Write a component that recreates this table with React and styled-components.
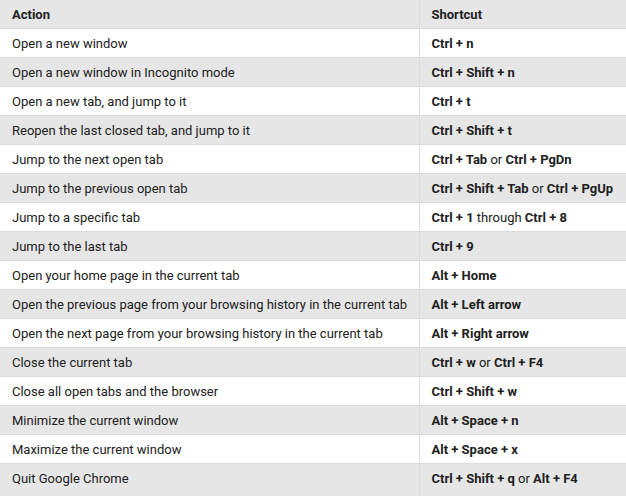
import React from 'react';
import styled, { createGlobalStyle } from 'styled-components';

const GlobalStyle = createGlobalStyle`
  html, body {
    margin: 0;
    padding: 0;
    background: #ffffff;
  }
  body {
    font-family: Roboto, 'Liberation Sans', Arial, sans-serif;
  }
`;

const Table = styled.table`
  width: 626px;
  border-collapse: collapse;
  table-layout: fixed;
  font-size: 13px;
  color: #212121;
`;

const Row = styled.tr`
  background: ${(p) => (p.$shaded ? '#e6e6e6' : '#ffffff')};
  border-bottom: 1px solid #dcdcdc;

  tbody &:last-child {
    border-bottom: none;
  }
  tbody &:last-child td {
    padding-bottom: 4px;
  }
`;

const Head = styled.th`
  height: 28px;
  padding: 0 12px;
  text-align: left;
  font-weight: 700;
  border-left: ${(p) => (p.$divider ? '1px solid #dcdcdc' : 'none')};
`;

const Cell = styled.td`
  height: 28px;
  padding: 0 12px;
  white-space: nowrap;
  font-weight: ${(p) => (p.$keys ? 700 : 400)};
  border-left: ${(p) => (p.$divider ? '1px solid #dcdcdc' : 'none')};
`;

const Joiner = styled.span`
  font-weight: 400;
`;

const shortcuts = [
  ['Open a new window', ['Ctrl + n']],
  ['Open a new window in Incognito mode', ['Ctrl + Shift + n']],
  ['Open a new tab, and jump to it', ['Ctrl + t']],
  ['Reopen the last closed tab, and jump to it', ['Ctrl + Shift + t']],
  ['Jump to the next open tab', ['Ctrl + Tab', 'or', 'Ctrl + PgDn']],
  ['Jump to the previous open tab', ['Ctrl + Shift + Tab', 'or', 'Ctrl + PgUp']],
  ['Jump to a specific tab', ['Ctrl + 1', 'through', 'Ctrl + 8']],
  ['Jump to the last tab', ['Ctrl + 9']],
  ['Open your home page in the current tab', ['Alt + Home']],
  ['Open the previous page from your browsing history in the current tab', ['Alt + Left arrow']],
  ['Open the next page from your browsing history in the current tab', ['Alt + Right arrow']],
  ['Close the current tab', ['Ctrl + w', 'or', 'Ctrl + F4']],
  ['Close all open tabs and the browser', ['Ctrl + Shift + w']],
  ['Minimize the current window', ['Alt + Space + n']],
  ['Maximize the current window', ['Alt + Space + x']],
  ['Quit Google Chrome', ['Ctrl + Shift + q', 'or', 'Alt + F4']],
];

const Keys = ({ parts }) =>
  parts.map((part, index) =>
    index % 2 === 1 ? (
      <Joiner key={index}> {part} </Joiner>
    ) : (
      <React.Fragment key={index}>{part}</React.Fragment>
    )
  );

const App = () => (
  <>
    <GlobalStyle />
    <Table>
      <colgroup>
        <col style={{ width: 419 }} />
        <col />
      </colgroup>
      <thead>
        <Row $shaded>
          <Head>Action</Head>
          <Head $divider>Shortcut</Head>
        </Row>
      </thead>
      <tbody>
        {shortcuts.map(([action, keys], index) => (
          <Row key={action} $shaded={index % 2 === 1}>
            <Cell>{action}</Cell>
            <Cell $divider $keys>
              <Keys parts={keys} />
            </Cell>
          </Row>
        ))}
      </tbody>
    </Table>
  </>
);

export default App;
